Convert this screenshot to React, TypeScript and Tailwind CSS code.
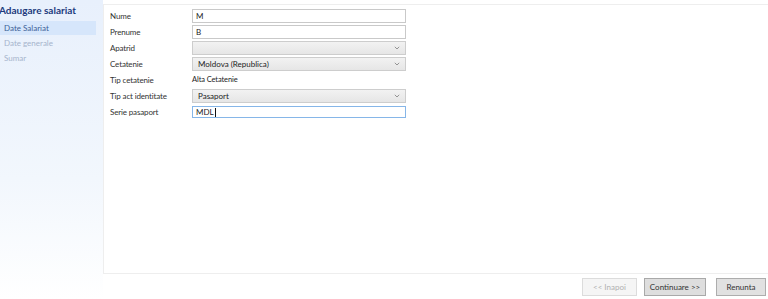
const FONT = "font-['Lato','Open_Sans',sans-serif]"

const STEPS = [
  { id: "salariat", label: "Date Salariat" },
  { id: "generale", label: "Date generale" },
  { id: "sumar", label: "Sumar" },
]

function Chevron() {
  return (
    <svg width="6" height="4" viewBox="0 0 6 4" className="ml-auto mr-[5px]">
      <path d="M0.8 0.8 L3 3 L5.2 0.8" fill="none" stroke="#8a8a8a" strokeWidth="0.9" />
    </svg>
  )
}

function TextBox({ value, focused }: { value: string; focused?: boolean }) {
  return (
    <div
      className={
        "w-[214px] bg-white flex items-center px-[3px] text-[8px] text-[#222] border " +
        (focused ? "border-[#86b6e8] h-[12px]" : "border-[#c9c9c9] h-[14px]")
      }
    >
      {value}
      {focused && <span className="w-px h-[9px] bg-[#111] ml-px" />}
    </div>
  )
}

function SelectBox({ value }: { value: string }) {
  return (
    <div className="w-[214px] h-[14px] flex items-center pl-[5px] text-[8px] text-[#222] border border-[#cdcdcd] bg-gradient-to-b from-[#f2f2f2] to-[#e6e6e6]">
      {value}
      <Chevron />
    </div>
  )
}

function Row({ label, children }: { label: string; children: React.ReactNode }) {
  return (
    <div className="h-[16px] flex items-center">
      <div className="w-[82px] text-[8px] text-[#333] tracking-[-0.15px]">{label}</div>
      {children}
    </div>
  )
}

export default function App() {
  return (
    <div className={"w-[768px] h-[299px] flex bg-white overflow-hidden " + FONT}>
      {/* Sidebar */}
      <aside className="w-[103px] shrink-0 bg-gradient-to-b from-[#e8f0fc] via-[#f2f7fd] via-60% to-white">
        <div className="h-[21px] flex items-center -ml-[1px] text-[10px] font-bold text-[#1c3a7c] whitespace-nowrap">
          Adaugare salariat
        </div>
        <div className="flex flex-col">
          {STEPS.map((s, i) => (
            <div
              key={s.id}
              className={
                i === 0
                  ? "w-[96px] h-[14px] mb-px flex items-center pl-[4px] text-[8px] bg-[#d6e6fb] text-[#3d5f97]"
                  : "h-[14px] mb-px flex items-center pl-[4px] text-[8px] text-[#a6b4cc]"
              }
            >
              {s.label}
            </div>
          ))}
        </div>
      </aside>

      {/* Main */}
      <div className="flex-1 flex flex-col pt-[4px]">
        <div className="h-[270px] bg-white border-l border-t border-b border-[#eeeeee] pt-[3px] pl-[6px] flex flex-col">
          <Row label="Nume"><TextBox value="M" /></Row>
          <Row label="Prenume"><TextBox value="B" /></Row>
          <Row label="Apatrid"><SelectBox value="" /></Row>
          <Row label="Cetatenie"><SelectBox value="Moldova (Republica)" /></Row>
          <Row label="Tip cetatenie">
            <span className="text-[7.5px] text-[#222] tracking-[-0.1px]">Alta Cetatenie</span>
          </Row>
          <Row label="Tip act identitate"><SelectBox value="Pasaport" /></Row>
          <Row label="Serie pasaport"><TextBox value="MDL" focused /></Row>
        </div>

        {/* Footer buttons */}
        <div className="flex justify-end items-center gap-[7px] pt-[4px] pr-[2px]">
          <button className="w-[55px] h-[18px] text-[8px] text-[#b0b0b0] bg-[#f5f5f5] border border-[#dcdcdc]">
            &lt;&lt; Inapoi
          </button>
          <button className="w-[62px] h-[18px] text-[8px] text-[#333] bg-[#dedede] border border-[#a9a9a9]">
            Continuare &gt;&gt;
          </button>
          <button className="ml-[3px] w-[50px] h-[18px] text-[8px] text-[#333] bg-[#e1e1e1] border border-[#adadad]">
            Renunta
          </button>
        </div>
      </div>
    </div>
  )
}
